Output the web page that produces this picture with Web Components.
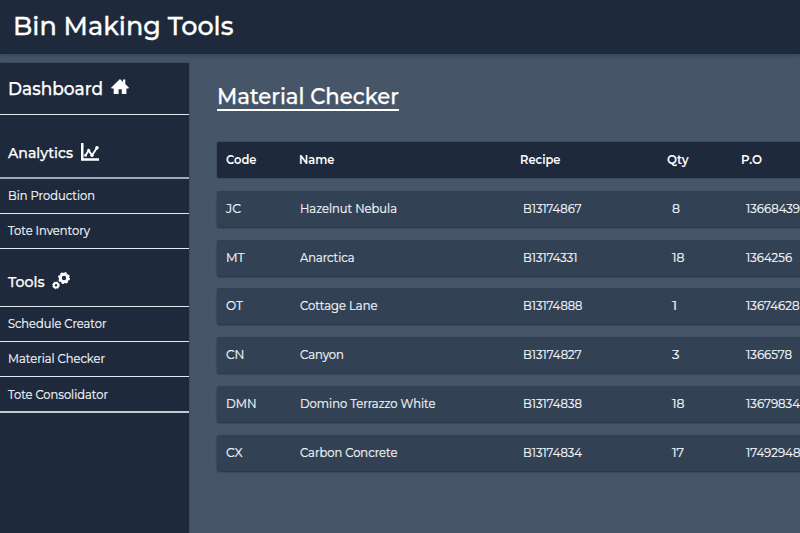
<!DOCTYPE html>
<html lang="en">
<head>
<meta charset="utf-8">
<title>Bin Making Tools</title>
<style>
html,body{margin:0;height:100%;overflow:hidden;background:#475569}
body{font-family:Montserrat,Inter,"Open Sans",sans-serif;color:#fff}
</style>
</head>
<body>
<bin-app></bin-app>
<script>
const define = (name, html, ready) => customElements.define(name, class extends HTMLElement {
  connectedCallback() {
    if (this.shadowRoot) return;
    const t = document.createElement('template');
    t.innerHTML = html;
    this.attachShadow({ mode: 'open' }).append(t.content.cloneNode(true));
    if (ready) ready.call(this, this.shadowRoot);
  }
});

// A single-line label whose glyphs stretch to the width given in its "w" attribute.
define('wide-text', `<style>
:host{display:inline-block;white-space:nowrap;line-height:1.2}
span{display:inline-block;transform-origin:0 50%}
</style><span><slot></slot></span>`, function (root) {
  const w = +this.getAttribute('w'), span = root.querySelector('span');
  const natural = span.getBoundingClientRect().width;
  this.style.width = w + 'px';
  if (natural) span.style.transform = `scaleX(${w / natural})`;
});

const icons = {
  home: `<svg width="18" height="16" viewBox="0 0 18 16"><path fill="#fff" d="M9 0 L12 2.9 V.6 H14.3 V5.1 L18 8.8 L17.4 9.5 H15.4 V15 H10.8 V10.2 H7.6 V15 H2.7 V9.5 H.6 L0 8.8Z"/></svg>`,
  chart: `<svg width="19" height="18" viewBox="0 0 19 18"><path fill="#fff" d="M0 0H2.5V15.2H18V17.7H0Z"/><path fill="none" stroke="#fff" stroke-width="1.9" d="M4.3 12.8 L7.6 7.4 L11 12.4 L16 4.8"/><circle cx="4.6" cy="12.4" r="1.4" fill="#fff"/><circle cx="7.7" cy="7.4" r="1.6" fill="#fff"/><circle cx="11" cy="12.2" r="1.7" fill="#fff"/><circle cx="16" cy="4.8" r="1.8" fill="#fff"/></svg>`,
  cogs: `<svg width="19" height="18" viewBox="0 0 19 18" fill="none" stroke="#fff"><circle cx="12" cy="6" r="3.7" stroke-width="3"/><circle cx="12" cy="6" r="5.3" stroke-width="1.4" stroke-dasharray="2.08 2.08"/><circle cx="4" cy="13.3" r="2.2" stroke-width="2"/><circle cx="4" cy="13.3" r="3.4" stroke-width="1" stroke-dasharray="1.335 1.335"/></svg>`
};
define('ui-icon', `<style>:host{display:block}svg{display:block}</style>`, function (root) {
  root.innerHTML += icons[this.getAttribute('name')];
});

define('app-header', `<style>
:host{display:flex;align-items:center;height:54px;box-sizing:border-box;padding:0 0 1px 13px;background:#1e293b;box-shadow:0 1px 5px rgba(15,23,42,.35);font-size:26.8px;font-weight:500;-webkit-text-stroke:.3px;position:relative}
</style><slot></slot>`);

define('side-heading', `<style>
:host{display:flex;align-items:center;box-sizing:border-box;padding-left:7.5px;border-bottom:1px solid #e2e8f0;gap:8px;font-weight:500;-webkit-text-stroke:.25px}
</style><slot></slot><slot name="icon"></slot>`);

define('side-link', `<style>
:host{display:flex;align-items:center;box-sizing:border-box;height:35px;padding:0 0 1px 7.5px;border-bottom:1px solid #e2e8f0;font-size:12.5px;color:#f1f5f9;-webkit-text-stroke:.22px}
:host([last]){height:36px;padding-top:1px;padding-bottom:0;border-bottom:2px solid #c5cad2}
</style><slot></slot>`);

define('side-nav', `<style>
:host{display:block;box-sizing:border-box;width:189px;height:470px;background:#1e293b;box-shadow:0 0 2px rgba(15,23,42,.4)}
.dash{height:52px;font-size:17.6px}
.ana{height:64px;font-size:15px;padding-top:14px;border-bottom:2px solid #a3a9b5}
.tools{height:58px;font-size:15px;padding-top:9px}
</style>
<side-heading class="dash"><wide-text w="95">Dashboard</wide-text><ui-icon slot="icon" name="home" style="margin-top:-4px"></ui-icon></side-heading>
<side-heading class="ana"><wide-text w="65">Analytics</wide-text><ui-icon slot="icon" name="chart" style="margin-top:-2px"></ui-icon></side-heading>
<side-link><wide-text w="87">Bin Production</wide-text></side-link>
<side-link><wide-text w="82">Tote Inventory</wide-text></side-link>
<side-heading class="tools"><wide-text w="36.5">Tools</wide-text><ui-icon slot="icon" name="cogs" style="margin-top:-2px"></ui-icon></side-heading>
<side-link><wide-text w="98.5">Schedule Creator</wide-text></side-link>
<side-link><wide-text w="97">Material Checker</wide-text></side-link>
<side-link last><wide-text w="100">Tote Consolidator</wide-text></side-link>`);

define('data-row', `<style>
:host{display:grid;grid-template-columns:74.5px 223px 148.5px 74px 1fr;align-items:center;box-sizing:border-box;height:36px;padding:1px 0 0 8.5px;background:#334155;border-radius:2px;box-shadow:0 1px 2px rgba(15,23,42,.6);font-size:12.3px;color:#f1f5f9;-webkit-text-stroke:.22px}
:host([head]){grid-template-columns:73.7px 221px 147px 74px 1fr;background:#1e293b;font-weight:600;color:#fff;-webkit-text-stroke:0;padding-top:0;box-shadow:0 0 2px rgba(15,23,42,.5)}
</style><slot></slot>`);

define('material-table', `<style>
:host{display:grid;gap:12.75px;width:640px}
</style>`, function (root) {
  const rows = [
    [['Code', 30.5], ['Name', 35.5], ['Recipe', 40.5], ['Qty', 21.5], ['P.O', 21]],
    [['JC', 15], ['Hazelnut Nebula', 97], ['B13174867', 58.5], ['8', 8], ['13668439', 54]],
    [['MT', 18.5], ['Anarctica', 54.5], ['B13174331', 54.5], ['18', 12.5], ['1364256', 46]],
    [['OT', 17], ['Cottage Lane', 77.5], ['B13174888', 59.5], ['1', 5.2], ['13674628', 53.5]],
    [['CN', 18.5], ['Canyon', 44], ['B13174827', 58.5], ['3', 7.5], ['1366578', 46]],
    [['DMN', 30.5], ['Domino Terrazzo White', 135.5], ['B13174838', 59], ['18', 12.5], ['13679834', 54]],
    [['CX', 16.5], ['Carbon Concrete', 97.5], ['B13174834', 59], ['17', 12], ['17492948', 54.5]]
  ];
  root.innerHTML += rows.map((r, i) => `<data-row${i ? '' : ' head'}>${r.map(([t, w]) => `<wide-text w="${w}">${t}</wide-text>`).join('')}</data-row>`).join('');
});

define('page-title', `<style>
:host{display:block;box-sizing:border-box;width:182px;height:28px;border-bottom:2px solid #fff;font-size:22.2px;font-weight:500;line-height:26px;padding-top:.5px;-webkit-text-stroke:.25px}
</style><slot></slot>`);

define('bin-app', `<style>
:host{display:flex;flex-direction:column;width:800px;height:533px;overflow:hidden;background:#475569}
.body{display:flex;gap:28px;padding-top:9px}
main{padding-top:20px;flex:1;min-width:0}
material-table{margin-top:31px}
</style>
<app-header><wide-text w="220.5">Bin Making Tools</wide-text></app-header>
<div class="body"><side-nav></side-nav><main>
<page-title><wide-text w="182">Material Checker</wide-text></page-title>
<material-table></material-table>
</main></div>`);
</script>
</body>
</html>
